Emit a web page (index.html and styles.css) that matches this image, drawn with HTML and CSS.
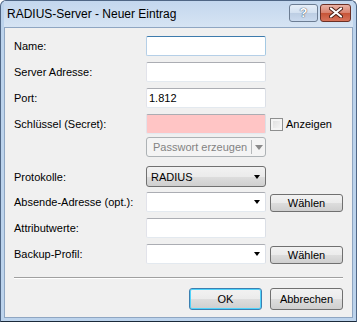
FILE: index.html
```html
<!DOCTYPE html>
<html lang="de">
  <head>
    <meta charset="UTF-8" />
    <title>RADIUS-Server - Neuer Eintrag</title>
    <link rel="stylesheet" href="styles.css">
  </head>
  <body>
    <div class="window">
      <div class="titlebar">
        <span class="title">RADIUS-Server - Neuer Eintrag</span>
        <div class="caption">
          <span class="cap-btn cap-help">?</span>
          <span class="cap-btn cap-close">
            <svg width="14" height="11" viewBox="0 0 14 11">
              <path d="M2 1.5 L12 9.5 M12 1.5 L2 9.5" stroke="#4a1d14" stroke-width="4" stroke-linecap="round" />
              <path d="M2 1.5 L12 9.5 M12 1.5 L2 9.5" stroke="#fff" stroke-width="2.2" stroke-linecap="round" />
            </svg>
          </span>
        </div>
      </div>

      <div class="client">
        <div class="form">
          <div class="row">
            <span class="label">Name:</span>
            <div class="edit focus"></div>
          </div>
          <div class="row">
            <span class="label">Server Adresse:</span>
            <div class="edit"></div>
          </div>
          <div class="row">
            <span class="label">Port:</span>
            <div class="edit">1.812</div>
          </div>
          <div class="row">
            <span class="label">Schlüssel (Secret):</span>
            <div class="edit secret"></div>
            <div class="check-wrap"><span class="checkbox"></span>Anzeigen</div>
          </div>
          <div class="row row-tight">
            <span class="label"></span>
            <div class="split disabled">
              <span class="split-text">Passwort erzeugen</span>
              <span class="split-arrow"><i class="arrow"></i></span>
            </div>
          </div>
          <div class="row row-list">
            <span class="label">Protokolle:</span>
            <div class="droplist">RADIUS<i class="arrow"></i></div>
          </div>
          <div class="row row-after-list">
            <span class="label">Absende-Adresse (opt.):</span>
            <div class="edit combo"><i class="arrow"></i></div>
            <button class="btn btn-small">Wählen</button>
          </div>
          <div class="row">
            <span class="label">Attributwerte:</span>
            <div class="edit"></div>
          </div>
          <div class="row">
            <span class="label">Backup-Profil:</span>
            <div class="edit combo"><i class="arrow"></i></div>
            <button class="btn btn-small">Wählen</button>
          </div>
        </div>

        <hr class="separator">

        <div class="actions">
          <button class="btn btn-default">OK</button>
          <button class="btn">Abbrechen</button>
        </div>
      </div>
    </div>
  </body>
</html>
```

FILE: styles.css
```css
* {
  box-sizing: border-box;
}

body {
  margin: 0;
  font-family: "Liberation Sans", Arial, sans-serif;
  font-size: 11px;
  color: #000;
  background: #fff;
}

.window {
  width: 357px;
  height: 322px;
  display: flex;
  flex-direction: column;
  border: 1px solid #4f6685;
  border-bottom-color: #1b2a3a;
  border-radius: 6px 6px 0 0;
  padding: 0 3px 3px;
  background: #bcd3ec;
}

.titlebar {
  height: 26px;
  display: flex;
  align-items: center;
  justify-content: space-between;
  padding: 0 2px 0 3px;
  background: linear-gradient(#c3d7ee, #d6e4f3);
}

.title {
  font-size: 12px;
  color: #000;
}

.caption {
  display: flex;
  gap: 2px;
  margin-top: -3px;
}

.cap-btn {
  height: 18px;
  display: flex;
  align-items: center;
  justify-content: center;
  border: 1px solid #6c7d93;
  border-radius: 3px;
}

.cap-help {
  width: 29px;
  font-weight: bold;
  font-size: 13px;
  color: #fff;
  text-shadow: 0 0 1px #3a4a5e, 0 0 1px #3a4a5e;
  background: linear-gradient(#e6eef8 0%, #d2e0f0 50%, #bccde3 51%, #cadaee 100%);
}

.cap-close {
  width: 31px;
  border-color: #6b3026;
  background: linear-gradient(#eab2a5 0%, #d8806c 50%, #c65438 51%, #d8735a 100%);
}

.client {
  flex: 1;
  background: #f0f0f0;
  border: 1px solid #8fa6c2;
  padding: 8px 0 0 9px;
}

.form {
  display: flex;
  flex-direction: column;
  gap: 6px;
}

.row {
  display: grid;
  grid-template-columns: 128px 120px 73px;
  column-gap: 4px;
  align-items: center;
  height: 20px;
  white-space: nowrap;
}

.row-tight {
  margin-top: -3px;
}

.row-list {
  margin-top: 3px;
  height: 21px;
}

.row-after-list {
  margin-top: -1px;
}

.edit {
  height: 20px;
  display: flex;
  align-items: center;
  padding: 0 2px;
  background: #fff;
  border: 1px solid;
  border-color: #abadb3 #dbdfe6 #e3e9ef #e2e3ea;
  border-radius: 2px;
}

.edit.focus {
  border-color: #3d7bad #a4c9e3 #b5cfe7 #b5cfe7;
}

.edit.secret {
  background: #ffc5c5;
}

.combo {
  justify-content: flex-end;
  padding-right: 5px;
}

.arrow {
  width: 0;
  height: 0;
  border-left: 3.5px solid transparent;
  border-right: 3.5px solid transparent;
  border-top: 4px solid #000;
}

.check-wrap {
  display: flex;
  align-items: center;
  gap: 3px;
}

.checkbox {
  width: 13px;
  height: 13px;
  border: 1px solid #8e8f8f;
  background: linear-gradient(135deg, #dcdcdc, #f8f8f8);
  box-shadow: inset 0 0 0 2px #f4f4f4;
}

.split {
  height: 20px;
  display: flex;
  align-items: center;
  border: 1px solid #adb2b5;
  border-radius: 3px;
  background: #f4f4f4;
  color: #838383;
}

.split-text {
  flex: 1;
  padding-left: 6px;
}

.split-arrow {
  width: 14px;
  height: 14px;
  display: flex;
  align-items: center;
  justify-content: center;
  border-left: 1px solid #b6b9bb;
}

.split-arrow .arrow {
  border-top-color: #8a8a8a;
  border-left-width: 4.5px;
  border-right-width: 4.5px;
  border-top-width: 5px;
}

.droplist {
  height: 21px;
  display: flex;
  align-items: center;
  justify-content: space-between;
  padding: 0 5px 0 4px;
  border: 1px solid #707070;
  border-radius: 3px;
  background: linear-gradient(#f2f2f2 0%, #ebebeb 50%, #dddddd 51%, #cfcfcf 100%);
}

.btn {
  height: 22px;
  padding: 0;
  border: 1px solid #707070;
  border-radius: 3px;
  background: linear-gradient(#f2f2f2 0%, #ebebeb 50%, #dddddd 51%, #cfcfcf 100%);
  font-family: inherit;
  font-size: 11px;
  color: #000;
  width: 73px;
}

.btn-small {
  height: 18px;
  margin-top: 1px;
}

.btn-default {
  border-color: #3c7fb1;
  box-shadow: inset 0 0 0 1px #4fd3fb;
}

.separator {
  margin: 13px 9px 0 0;
  border: 0;
  border-top: 1px solid #a0a0a0;
  border-bottom: 1px solid #fff;
}

.actions {
  display: flex;
  justify-content: flex-end;
  gap: 8px;
  margin-top: 9px;
  padding-right: 9px;
}
```
